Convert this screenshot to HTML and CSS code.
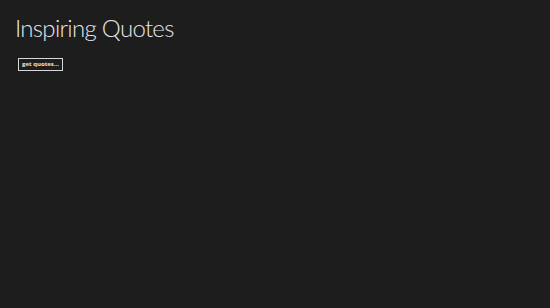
FILE: index.html
```html
<!DOCTYPE html>
<html>
<head>
<meta charset="utf-8">
<link rel="stylesheet" href="styles.css">
</head>
<body>
<main class="page">
  <h1 class="title">Inspiring Quotes</h1>
  <button class="btn">get quotes...</button>
</main>
</body>
</html>
```
FILE: styles.css
```css
html, body {
  margin: 0;
  padding: 0;
  background: #1d1d1d;
  height: 100%;
}
.page {
  display: flex;
  flex-direction: column;
  align-items: flex-start;
  padding: 13px 0 0 15px;
  font-family: "Lato", "Noto Sans", sans-serif;
}
.title {
  margin: 0;
  font-size: 24px;
  font-weight: 300;
  line-height: 30px;
  color: #e6e6e6;
  letter-spacing: -0.7px;
}
.btn {
  margin: 15px 0 0 3px;
  width: 45px;
  height: 13px;
  padding: 0;
  border: 1px solid #d8d8d8;
  background: #1d1d1d;
  color: #e4e4e4;
  font-family: "Open Sans", "Noto Sans", sans-serif;
  font-size: 6px;
  font-weight: 700;
  line-height: 11px;
  box-sizing: border-box;
  text-align: center;
}
```
